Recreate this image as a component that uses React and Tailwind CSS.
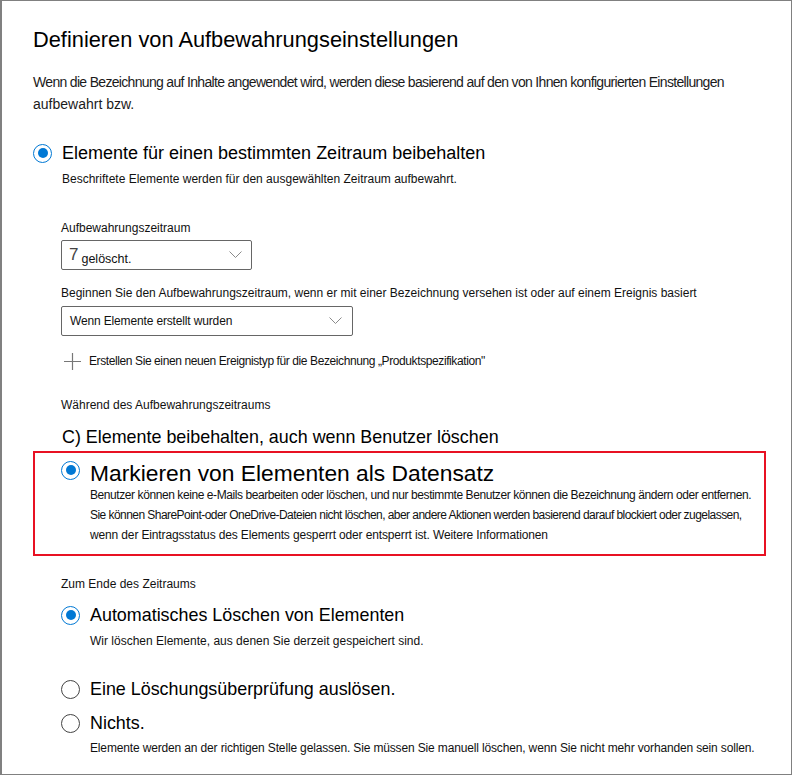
import React from "react";

const font = { fontFamily: '"Liberation Sans", Arial, sans-serif' };

function Radio({ checked }) {
  return (
    <span
      className={
        checked
          ? "flex h-[19px] w-[19px] shrink-0 items-center justify-center rounded-full border-[1.5px] border-[#0078d4] bg-white"
          : "flex h-[19px] w-[19px] shrink-0 items-center justify-center rounded-full border-[1.5px] border-[#444] bg-white"
      }
    >
      {checked ? <span className="h-[10px] w-[10px] rounded-full bg-[#0078d4]" /> : null}
    </span>
  );
}

function Chevron() {
  return (
    <svg width="13" height="8" viewBox="0 0 13 8" fill="none">
      <path d="M0.5 0.5 L6.5 6.5 L12.5 0.5" stroke="#8a8a8a" strokeWidth="1" />
    </svg>
  );
}

export default function App() {
  return (
    <div className="h-[776px] w-[793px] bg-white" style={font}>
      <div className="h-[775px] w-[792px] border border-l-2 border-[#808080] text-[#111]">
        <div className="pl-[31px]">
          <h1 className="mt-[25px] h-[28px] whitespace-nowrap text-[21.8px] leading-[28px] font-normal text-black">
            Definieren von Aufbewahrungseinstellungen
          </h1>
          <div className="mt-[17px] text-[14px] leading-[22px] text-[#1b1b1b]">
            <div className="whitespace-nowrap tracking-[-0.68px]">
              Wenn die Bezeichnung auf Inhalte angewendet wird, werden diese basierend auf den von Ihnen konfigurierten Einstellungen
            </div>
            <div className="whitespace-nowrap">aufbewahrt bzw.</div>
          </div>

          <div className="mt-[26px] flex h-[24px] items-center gap-[10px]">
            <Radio checked />
            <span className="whitespace-nowrap text-[18px] leading-[24px] text-black">
              Elemente für einen bestimmten Zeitraum beibehalten
            </span>
          </div>
          <div className="mt-[5px] h-[18px] pl-[29px] whitespace-nowrap text-[12px] leading-[18px]">
            Beschriftete Elemente werden für den ausgewählten Zeitraum aufbewahrt.
          </div>

          <div className="pl-[28px]">
            <div className="mt-[32px] h-[16px] whitespace-nowrap text-[12px] leading-[16px]">Aufbewahrungszeitraum</div>
            <div className="mt-[4px] flex h-[30px] w-[191px] items-center justify-between rounded-[2px] border border-[#666] pl-[7px] pr-[9px]">
              <span className="flex items-end gap-[3px]">
                <span className="text-[17px] leading-[18px] text-[#444]">7</span>
                <span className="translate-y-[2px] text-[12.5px] leading-[14px]">gelöscht.</span>
              </span>
              <Chevron />
            </div>

            <div className="mt-[15px] h-[16px] whitespace-nowrap text-[12px] leading-[16px]">
              Beginnen Sie den Aufbewahrungszeitraum, wenn er mit einer Bezeichnung versehen ist oder auf einem Ereignis basiert
            </div>
            <div className="mt-[5px] flex h-[30px] w-[292px] items-center justify-between rounded-[2px] border border-[#666] pl-[8px] pr-[10px]">
              <span className="whitespace-nowrap text-[12px] tracking-[-0.15px]">Wenn Elemente erstellt wurden</span>
              <Chevron />
            </div>

            <div className="mt-[15px] flex h-[20px] items-center gap-[8px] pl-[3px]">
              <svg width="17" height="17" viewBox="0 0 17 17">
                <path d="M8.5 0 V17 M0 8.5 H17" stroke="#777" strokeWidth="1.2" />
              </svg>
              <span className="whitespace-nowrap text-[12px] leading-[20px] tracking-[-0.4px]">
                Erstellen Sie einen neuen Ereignistyp für die Bezeichnung „Produktspezifikation"
              </span>
            </div>

            <div className="mt-[26px] h-[16px] whitespace-nowrap text-[12px] leading-[16px]">Während des Aufbewahrungszeitraums</div>
            <div className="mt-[13px] h-[22px] whitespace-nowrap pl-[1px] text-[17.9px] leading-[22px] text-black">
              C) Elemente beibehalten, auch wenn Benutzer löschen
            </div>
          </div>

          <div className="mt-[3px] h-[105px] w-[733px] border-2 border-[#e81123] pl-[26px] pt-[8px]">
            <div className="flex h-[24px] items-center gap-[10px]">
              <span className="-translate-y-[3px]">
                <Radio checked />
              </span>
              <span className="whitespace-nowrap text-[22.8px] leading-[24px] text-black">
                Markieren von Elementen als Datensatz
              </span>
            </div>
            <div className="pl-[29px] text-[12px] leading-[20px]">
              <div className="whitespace-nowrap tracking-[-0.42px]">
                Benutzer können keine e-Mails bearbeiten oder löschen, und nur bestimmte Benutzer können die Bezeichnung ändern oder entfernen.
              </div>
              <div className="whitespace-nowrap tracking-[-0.55px]">
                Sie können SharePoint-oder OneDrive-Dateien nicht löschen, aber andere Aktionen werden basierend darauf blockiert oder zugelassen,
              </div>
              <div className="whitespace-nowrap tracking-[-0.14px]">
                wenn der Eintragsstatus des Elements gesperrt oder entsperrt ist. Weitere Informationen
              </div>
            </div>
          </div>

          <div className="pl-[28px]">
            <div className="mt-[20px] h-[16px] whitespace-nowrap text-[12px] leading-[16px]">Zum Ende des Zeitraums</div>

            <div className="mt-[11px] flex h-[24px] items-center gap-[10px]">
              <Radio checked />
              <span className="whitespace-nowrap text-[17.9px] leading-[24px] text-black">Automatisches Löschen von Elementen</span>
            </div>
            <div className="mt-[5px] h-[18px] pl-[29px] whitespace-nowrap text-[12px] leading-[18px]">
              Wir löschen Elemente, aus denen Sie derzeit gespeichert sind.
            </div>

            <div className="mt-[27px] flex h-[24px] items-center gap-[10px]">
              <Radio checked={false} />
              <span className="whitespace-nowrap text-[17.9px] leading-[24px] text-black">Eine Löschungsüberprüfung auslösen.</span>
            </div>

            <div className="mt-[10px] flex h-[24px] items-center gap-[10px]">
              <Radio checked={false} />
              <span className="whitespace-nowrap text-[17.9px] leading-[24px] text-black">Nichts.</span>
            </div>
            <div className="mt-[4px] h-[18px] pl-[29px] whitespace-nowrap text-[12px] leading-[18px] tracking-[-0.15px]">
              Elemente werden an der richtigen Stelle gelassen. Sie müssen Sie manuell löschen, wenn Sie nicht mehr vorhanden sein sollen.
            </div>
          </div>
        </div>
      </div>
    </div>
  );
}
